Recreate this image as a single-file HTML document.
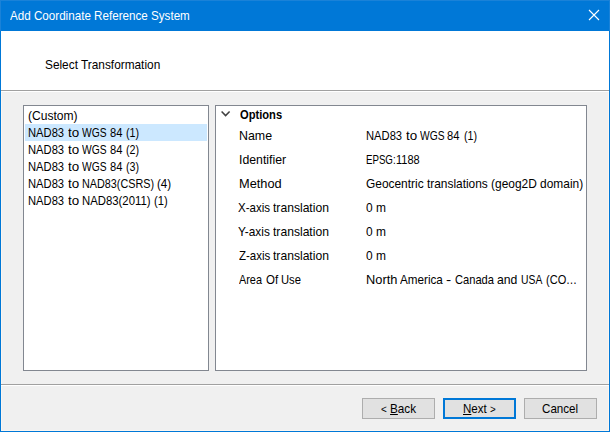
<!DOCTYPE html>
<html><head><meta charset="utf-8">
<style>
html,body{margin:0;padding:0}
body{width:610px;height:432px;overflow:hidden;background:#f0f0f0;position:relative;font-family:"Liberation Sans",sans-serif}
.a{position:absolute;box-sizing:border-box}
.t{position:absolute;font-size:13px;line-height:16px;white-space:pre;transform-origin:0 0}
.b{font-weight:bold}
.s{font-size:11px}
u{text-decoration:underline;text-underline-offset:1px}
</style></head><body>
<!-- title bar -->
<div class="a" style="left:0;top:0;width:610px;height:31px;background:#0078d7;border:1px solid #1a82d8;border-bottom:0"></div>
<!-- window borders body -->
<div class="a" style="left:0;top:31px;width:1px;height:401px;background:#0078d7"></div>
<div class="a" style="left:609px;top:31px;width:1px;height:401px;background:#0078d7"></div>
<div class="a" style="left:0;top:431px;width:610px;height:1px;background:#0078d7"></div>
<div class="a" style="left:1px;top:92px;width:1px;height:339px;background:#fcf6f0"></div>
<div class="a" style="left:608px;top:92px;width:1px;height:339px;background:#fcf6f0"></div>
<div class="a" style="left:1px;top:430px;width:608px;height:1px;background:#fcf6f0"></div>
<!-- header -->
<div class="a" style="left:1px;top:31px;width:608px;height:59px;background:#fff"></div>
<div class="a" style="left:1px;top:90px;width:608px;height:1px;background:#a0a0a0"></div>
<div class="a" style="left:1px;top:91px;width:608px;height:1px;background:#fff"></div>
<!-- close X -->
<svg class="a" style="left:585px;top:6px" width="18" height="18" viewBox="0 0 18 18"><path d="M4 4L14 14M14 4L4 14" stroke="#fff" stroke-width="1.1" fill="none"/></svg>
<!-- list box -->
<div class="a" style="left:23px;top:105px;width:186px;height:266px;background:#fff;border:1px solid #828790"></div>
<div class="a" style="left:25px;top:124px;width:182px;height:17px;background:#cce8ff"></div>
<!-- options box -->
<div class="a" style="left:215px;top:105px;width:372px;height:266px;background:#fff;border:1px solid #828790"></div>
<svg class="a" style="left:218px;top:108px" width="16" height="12" viewBox="0 0 16 12"><path d="M3.6 3.4L7.6 7.6L11.6 3.4" stroke="#404040" stroke-width="1.5" fill="none"/></svg>
<!-- bottom separator -->
<div class="a" style="left:1px;top:384px;width:608px;height:1px;background:#a0a0a0"></div>
<div class="a" style="left:1px;top:385px;width:608px;height:1px;background:#fff"></div>
<!-- buttons -->
<div class="a" style="left:362px;top:398px;width:73px;height:21px;background:#e1e1e1;border:1px solid #adadad"></div>
<div class="a" style="left:443px;top:398px;width:73px;height:21px;background:#e1e1e1;border:2px solid #0078d7"></div>
<div class="a" style="left:524px;top:398px;width:73px;height:21px;background:#e1e1e1;border:1px solid #adadad"></div>
<div class="t" style="left:10.00px;top:8px;color:#fff;transform:scaleX(0.8950)">Add Coordinate Reference System</div>
<div class="t" style="left:45.49px;top:57px;color:#000;transform:scaleX(0.9112)">Select Transformation</div>
<div class="t" style="left:28.07px;top:108px;color:#000;transform:scaleX(0.9288)">(Custom)</div>
<div class="t" style="left:28.14px;top:125px;color:#000;transform:scaleX(0.8610)">NAD83</div>
<div class="t" style="left:67.70px;top:125px;color:#000;transform:scaleX(1.0300)">to</div>
<div class="t" style="left:82.00px;top:125px;color:#000;transform:scaleX(0.7903)">WGS</div>
<div class="t" style="left:109.54px;top:125px;color:#000;transform:scaleX(0.8615)">84</div>
<div class="t" style="left:125.98px;top:125px;color:#000;transform:scaleX(0.8214)">(1)</div>
<div class="t" style="left:28.14px;top:142px;color:#000;transform:scaleX(0.8610)">NAD83</div>
<div class="t" style="left:67.70px;top:142px;color:#000;transform:scaleX(1.0300)">to</div>
<div class="t" style="left:82.00px;top:142px;color:#000;transform:scaleX(0.7903)">WGS</div>
<div class="t" style="left:109.54px;top:142px;color:#000;transform:scaleX(0.8615)">84</div>
<div class="t" style="left:125.98px;top:142px;color:#000;transform:scaleX(0.8214)">(2)</div>
<div class="t" style="left:28.14px;top:159px;color:#000;transform:scaleX(0.8610)">NAD83</div>
<div class="t" style="left:67.70px;top:159px;color:#000;transform:scaleX(1.0300)">to</div>
<div class="t" style="left:82.00px;top:159px;color:#000;transform:scaleX(0.7903)">WGS</div>
<div class="t" style="left:109.54px;top:159px;color:#000;transform:scaleX(0.8615)">84</div>
<div class="t" style="left:125.98px;top:159px;color:#000;transform:scaleX(0.8214)">(3)</div>
<div class="t" style="left:28.14px;top:176px;color:#000;transform:scaleX(0.8610)">NAD83</div>
<div class="t" style="left:67.70px;top:176px;color:#000;transform:scaleX(1.0300)">to</div>
<div class="t" style="left:81.87px;top:176px;color:#000;transform:scaleX(0.8306)">NAD83(CSRS)</div>
<div class="t" style="left:156.81px;top:176px;color:#000;transform:scaleX(0.8929)">(4)</div>
<div class="t" style="left:28.14px;top:193px;color:#000;transform:scaleX(0.8610)">NAD83</div>
<div class="t" style="left:67.70px;top:193px;color:#000;transform:scaleX(1.0300)">to</div>
<div class="t" style="left:81.83px;top:193px;color:#000;transform:scaleX(0.8727)">NAD83(2011)</div>
<div class="t" style="left:154.24px;top:193px;color:#000;transform:scaleX(0.8571)">(1)</div>
<div class="t b" style="left:239.50px;top:107px;color:#000;transform:scaleX(0.8571)">Options</div>
<div class="t" style="left:238.65px;top:128px;color:#000;transform:scaleX(0.9545)">Name</div>
<div class="t" style="left:238.66px;top:152px;color:#000;transform:scaleX(0.9449)">Identifier</div>
<div class="t" style="left:238.62px;top:176px;color:#000;transform:scaleX(0.9833)">Method</div>
<div class="t" style="left:238.31px;top:200px;color:#000;transform:scaleX(0.8857)">X-axis</div>
<div class="t" style="left:273.20px;top:200px;color:#000;transform:scaleX(0.9322)">translation</div>
<div class="t" style="left:238.29px;top:224px;color:#000;transform:scaleX(0.9118)">Y-axis</div>
<div class="t" style="left:273.20px;top:224px;color:#000;transform:scaleX(0.9322)">translation</div>
<div class="t" style="left:239.20px;top:248px;color:#000;transform:scaleX(0.8857)">Z-axis</div>
<div class="t" style="left:273.20px;top:248px;color:#000;transform:scaleX(0.9322)">translation</div>
<div class="t" style="left:239.00px;top:272px;color:#000;transform:scaleX(0.8357)">Area</div>
<div class="t" style="left:266.12px;top:272px;color:#000;transform:scaleX(0.8846)">Of</div>
<div class="t" style="left:281.04px;top:272px;color:#000;transform:scaleX(0.8636)">Use</div>
<div class="t" style="left:366.04px;top:128px;color:#000;transform:scaleX(0.8610)">NAD83</div>
<div class="t" style="left:405.60px;top:128px;color:#000;transform:scaleX(1.0300)">to</div>
<div class="t" style="left:419.90px;top:128px;color:#000;transform:scaleX(0.7903)">WGS</div>
<div class="t" style="left:447.44px;top:128px;color:#000;transform:scaleX(0.8615)">84</div>
<div class="t" style="left:463.88px;top:128px;color:#000;transform:scaleX(0.8214)">(1)</div>
<div class="t" style="left:366.16px;top:152px;color:#000;transform:scaleX(0.7447)">EPSG:</div>
<div class="t" style="left:396.16px;top:152px;color:#000;transform:scaleX(0.8444)">1188</div>
<div class="t" style="left:365.98px;top:176px;color:#000;transform:scaleX(0.9162)">Geocentric translations (geog2D domain)</div>
<div class="t" style="left:366.40px;top:200px;color:#000;transform:scaleX(0.9190)">0 m</div>
<div class="t" style="left:366.40px;top:224px;color:#000;transform:scaleX(0.9190)">0 m</div>
<div class="t" style="left:366.40px;top:248px;color:#000;transform:scaleX(0.9190)">0 m</div>
<div class="t" style="left:365.61px;top:272px;color:#000;transform:scaleX(0.9867)">North</div>
<div class="t" style="left:400.00px;top:272px;color:#000;transform:scaleX(0.8979)">America</div>
<div class="t" style="left:446.40px;top:272px;color:#000;transform:scaleX(1.2000)">-</div>
<div class="t" style="left:454.84px;top:272px;color:#000;transform:scaleX(0.8556)">Canada</div>
<div class="t" style="left:497.46px;top:272px;color:#000;transform:scaleX(0.9400)">and</div>
<div class="t" style="left:521.10px;top:272px;color:#000;transform:scaleX(0.7962)">USA</div>
<div class="t" style="left:546.35px;top:272px;color:#000;transform:scaleX(0.8500)">(CO</div>
<div class="t" style="left:565.91px;top:272px;color:#000;transform:scaleX(0.8444)">…</div>
<div class="t" style="left:381.20px;top:401px;color:#000;transform:scaleX(0.9000)"><span class="s">&lt;</span> <u>B</u>ack</div>
<div class="t" style="left:463.00px;top:401px;color:#000;transform:scaleX(0.8889)"><u>N</u>ext <span class="s">&gt;</span></div>
<div class="t" style="left:541.71px;top:401px;color:#000;transform:scaleX(0.8923)">Cancel</div>
</body></html>
